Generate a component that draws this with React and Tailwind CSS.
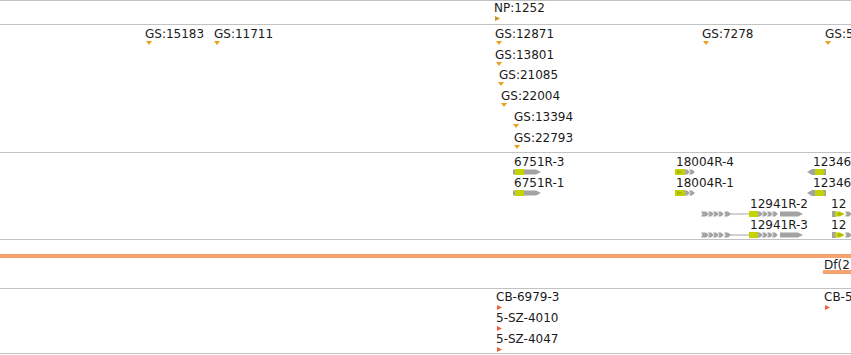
const GRAY = "#a3a3a3";
const LIME = "#c3d400";

const gsLabels = [
  { text: "GS:15183", x: 145, row: 0, tx: 146 },
  { text: "GS:11711", x: 214, row: 0, tx: 214 },
  { text: "GS:12871", x: 495, row: 0, tx: 496 },
  { text: "GS:13801", x: 495, row: 1, tx: 496 },
  { text: "GS:21085", x: 499, row: 2, tx: 498 },
  { text: "GS:22004", x: 501, row: 3, tx: 501 },
  { text: "GS:13394", x: 514, row: 4, tx: 513 },
  { text: "GS:22793", x: 514, row: 5, tx: 514 },
  { text: "GS:7278", x: 702, row: 0, tx: 703 },
  { text: "GS:5", x: 825, row: 0, tx: 825 },
];

const cbLabels = [
  { text: "CB-6979-3", x: 496, row: 0 },
  { text: "5-SZ-4010", x: 496, row: 1 },
  { text: "5-SZ-4047", x: 496, row: 2 },
  { text: "CB-5", x: 824, row: 0 },
];

const geneLabels = [
  { text: "6751R-3", x: 514, top: 1.7 },
  { text: "6751R-1", x: 514, top: 23 },
  { text: "18004R-4", x: 676, top: 1.7 },
  { text: "18004R-1", x: 676, top: 23 },
  { text: "12346", x: 813, top: 1.7 },
  { text: "12346", x: 813, top: 23 },
  { text: "12941R-2", x: 750, top: 44 },
  { text: "12941R-3", x: 750, top: 65.4 },
  { text: "12", x: 831, top: 44 },
  { text: "12", x: 831, top: 65.4 },
];

function Label({ text, x, top }) {
  return (
    <div
      className="absolute whitespace-nowrap text-[12px] leading-[14px] text-[#1a1a1a]"
      style={{ left: x, top }}
    >
      {text}
    </div>
  );
}

// arrow pointing right, notched at the back
function chev(x, w, fill) {
  return (
    <polygon
      key={"c" + x}
      points={`${x},1.5 ${x + w - 3},1.5 ${x + w},4 ${x + w - 3},6.5 ${x},6.5 ${x + 1.5},4`}
      fill={fill}
    />
  );
}

function arrowR(x, w, fill) {
  return (
    <polygon
      key={"a" + x}
      points={`${x},1.5 ${x + w - 5},1.5 ${x + w},4 ${x + w - 5},6.5 ${x},6.5`}
      fill={fill}
    />
  );
}

function box(x, w, fill) {
  return <rect key={"b" + x} x={x} y={1} width={w} height={6} fill={fill} />;
}

function Glyph({ top, children }) {
  return (
    <svg className="absolute left-0" style={{ top }} width="851" height="8">
      {children}
    </svg>
  );
}

function rowAB() {
  return [
    arrowR(513, 28, GRAY),
    box(515, 9, LIME),
    box(675, 10, LIME),
    <polygon key="y1" points="677,2 683,4 677,6" fill="#a8b800" />,
    chev(684, 6, GRAY),
    chev(689, 6, GRAY),
    <polygon key="l1" points="807,4 812,1 816,1 816,7 812,7" fill={GRAY} />,
    box(815, 11, LIME),
    <polygon key="n1" points="823,1 826,1 826,7 823,7 825,4" fill={GRAY} />,
  ];
}

function rowCD() {
  return [
    chev(701, 8, GRAY),
    chev(708, 6, GRAY),
    chev(713, 6, GRAY),
    chev(718, 6, GRAY),
    chev(724, 7, GRAY),
    <rect key="ln" x={730} y={3.5} width={19} height={1} fill={GRAY} />,
    box(749, 9, LIME),
    chev(757, 6, GRAY),
    chev(762, 6, GRAY),
    chev(767, 6, GRAY),
    chev(772, 6, GRAY),
    arrowR(780, 23, GRAY),
    box(832, 4, GRAY),
    arrowR(835, 10, LIME),
    <polygon key="t2" points="838,2 843,4 838,6" fill="#a8b800" />,
    chev(845, 7, GRAY),
  ];
}

export default function App() {
  return (
    <div className="w-[851px] h-[355px] overflow-hidden bg-white font-['DejaVu_Sans',sans-serif]">
      <div className="relative h-[24px] border-t border-[#c2c2c2]">
        <Label text="NP:1252" x={494} top={0} />
        <svg className="absolute left-[495px] top-[15px]" width="6" height="6">
          <polygon points="0,0 5,2.5 0,5" fill="#d0901c" />
        </svg>
      </div>

      <div className="relative h-[128px] border-t border-[#c2c2c2]">
        {gsLabels.map((g, i) => (
          <div key={i}>
            <Label text={g.text} x={g.x} top={2 + g.row * 20.7} />
            <svg
              className="absolute"
              style={{ left: g.tx, top: 16 + g.row * 20.7 }}
              width="6"
              height="5"
            >
              <polygon points="0,0 6,0 3,4" fill="#e8a21c" />
            </svg>
          </div>
        ))}
      </div>

      <div className="relative h-[87px] border-t border-[#c2c2c2]">
        {geneLabels.map((g, i) => (
          <Label key={i} text={g.text} x={g.x} top={g.top} />
        ))}
        <Glyph top={15}>{rowAB()}</Glyph>
        <Glyph top={36}>{rowAB()}</Glyph>
        <Glyph top={57}>{rowCD()}</Glyph>
        <Glyph top={78}>{rowCD()}</Glyph>
      </div>

      <div className="relative h-[49px] border-t border-[#c2c2c2]">
        <div className="mt-[14px] h-[4px] bg-[#f5a36f]" />
        <Label text="Df(2" x={824} top={18.4} />
        <div className="absolute left-[823px] right-0 top-[30px] h-[4px] bg-[#f5a36f]" />
      </div>

      <div className="relative h-[66px] border-y border-[#c2c2c2]">
        {cbLabels.map((c, i) => (
          <div key={i}>
            <Label text={c.text} x={c.x} top={0.7 + c.row * 21} />
            <svg
              className="absolute"
              style={{ left: c.x + 1, top: 16 + c.row * 21 }}
              width="6"
              height="6"
            >
              <polygon points="0,0 5,2.5 0,5" fill="#f0603e" />
            </svg>
          </div>
        ))}
      </div>
    </div>
  );
}
